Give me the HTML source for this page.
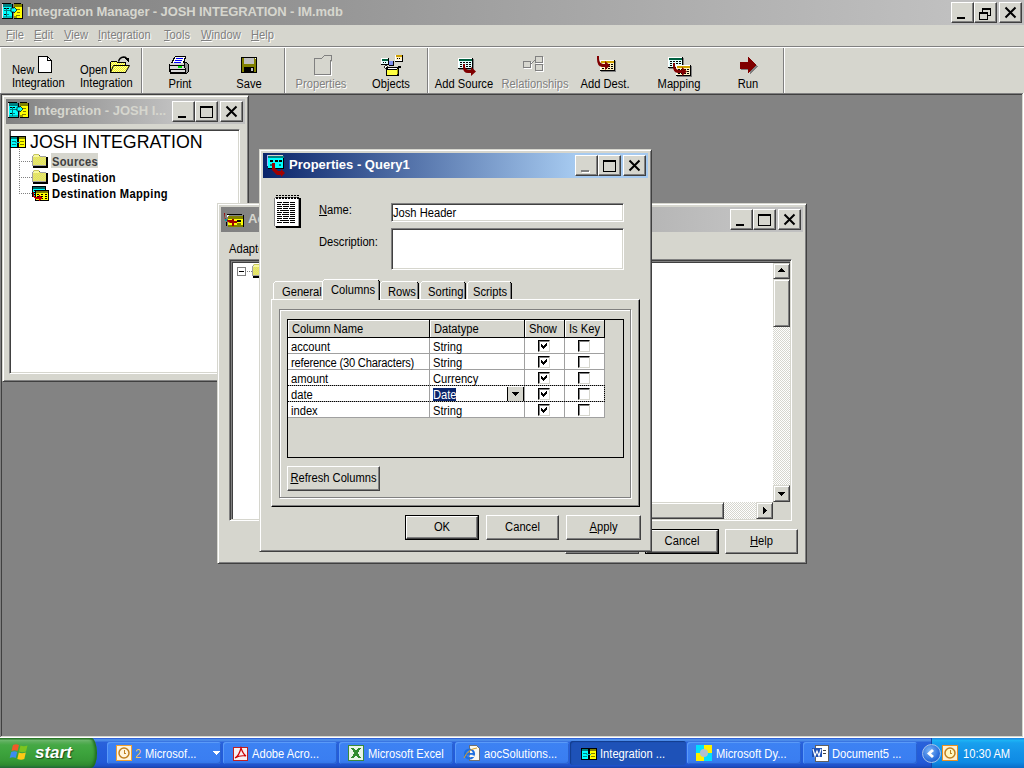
<!DOCTYPE html>
<html><head><meta charset="utf-8"><style>
*{box-sizing:border-box;margin:0;padding:0}
html,body{width:1024px;height:768px;overflow:hidden}
body{position:relative;background:#838383;font:11px "Liberation Sans",sans-serif;color:#000}
.a{position:absolute}
.t{position:absolute;white-space:nowrap;line-height:13px;font-size:12px;transform:translateY(1px) scaleX(0.93);transform-origin:0 0}
.raised{position:absolute;background:#D6D6CE;border:1px solid;border-color:#fff #404040 #404040 #fff;box-shadow:inset -1px -1px #808080}
.winf{position:absolute;background:#D6D6CE;border:1px solid;border-color:#D6D6CE #404040 #404040 #D6D6CE;box-shadow:inset 1px 1px #fff,inset -1px -1px #808080}
.sunk{position:absolute;background:#fff;border:1px solid;border-color:#808080 #fff #fff #808080;box-shadow:inset 1px 1px #404040,inset -1px -1px #D6D6CE}
.ttl{position:absolute;white-space:nowrap;font-weight:bold;font-size:13px;line-height:16px}
.dis{color:#808080;text-shadow:1px 1px 0 #fff}
u{text-decoration:underline;text-decoration-thickness:1px;text-underline-offset:1px}
svg{overflow:visible}
</style></head><body>
<div class="a" style="left:0px;top:0px;width:1024px;height:25px;background:linear-gradient(90deg,#808080,#C0C0C0 951px);"></div>
<svg class="a" style="left:2px;top:3px" width="21" height="16" viewBox="0 0 21 16" shape-rendering="crispEdges"><rect x="0" y="0" width="9" height="1" fill="#000"/><rect x="0" y="1" width="1" height="14" fill="#F0E8E8"/><rect x="1" y="1" width="9" height="3" fill="#008080"/><rect x="1" y="4" width="9" height="11" fill="#00FFFF"/><rect x="2" y="5" width="2" height="1" fill="#000"/><rect x="5" y="5" width="2" height="1" fill="#000"/><rect x="2" y="7" width="7" height="1" fill="#008080"/><rect x="2" y="11" width="2" height="1" fill="#000"/><rect x="5" y="11" width="2" height="1" fill="#008080"/><rect x="1" y="13" width="9" height="2" fill="#00C0C0"/><rect x="4" y="5" width="1" height="9" fill="#008080"/><rect x="10" y="1" width="1" height="15" fill="#000"/><rect x="0" y="15" width="11" height="1" fill="#000"/><rect x="12" y="0" width="7" height="1" fill="#000"/><rect x="12" y="1" width="8" height="3" fill="#808000"/><rect x="12" y="4" width="8" height="11" fill="#FFFF00"/><rect x="14" y="6" width="4" height="1" fill="#808000"/><rect x="15" y="9" width="3" height="1" fill="#808000"/><rect x="14" y="12" width="4" height="1" fill="#808000"/><rect x="12" y="13" width="3" height="2" fill="#A0A000"/><rect x="20" y="1" width="1" height="15" fill="#000"/><rect x="12" y="15" width="9" height="1" fill="#000"/><path d="M9 5h3v-1l3 3l-3 3v-1h-3z" fill="#00FFFF" stroke="#000" stroke-width="0.7" shape-rendering="auto"/></svg>
<div class="ttl" style="left:27px;top:4px;color:#D6D6CE;letter-spacing:-0.1px">Integration Manager - JOSH INTEGRATION - IM.mdb</div>
<div class="raised" style="left:951px;top:2px;width:23px;height:21px"><svg class="a" style="left:0;top:0" width="21" height="19" shape-rendering="crispEdges"><rect x="5" y="14" width="8" height="2" fill="#000"/></svg></div>
<div class="raised" style="left:974px;top:2px;width:23px;height:21px"><svg class="a" style="left:0;top:0" width="21" height="19" shape-rendering="crispEdges"><path d="M7.5 6.5h8v6h-8z" fill="none" stroke="#000"/><rect x="7" y="5" width="9" height="2" fill="#000"/><rect x="4" y="9" width="9" height="8" fill="#D6D6CE"/><path d="M4.5 9.5h8v7h-8z" fill="none" stroke="#000"/><rect x="4" y="9" width="9" height="2" fill="#000"/></svg></div>
<div class="raised" style="left:999px;top:2px;width:23px;height:21px"><svg class="a" style="left:0;top:0" width="21" height="19" shape-rendering="crispEdges"><path d="M5.5 4.5L15.5 14.5M15.5 4.5L5.5 14.5" stroke="#000" stroke-width="2" shape-rendering="auto"/></svg></div>
<div class="a" style="left:0px;top:25px;width:1024px;height:21px;background:#D6D6CE;"></div>
<div class="a" style="left:0px;top:46px;width:1024px;height:1px;background:#808080;"></div>
<div class="a" style="left:0px;top:47px;width:1024px;height:1px;background:#fff;"></div>
<div class="t dis" style="left:6px;top:28px;"><u>F</u>ile</div>
<div class="t dis" style="left:34px;top:28px;"><u>E</u>dit</div>
<div class="t dis" style="left:64px;top:28px;"><u>V</u>iew</div>
<div class="t dis" style="left:98px;top:28px;"><u>I</u>ntegration</div>
<div class="t dis" style="left:164px;top:28px;"><u>T</u>ools</div>
<div class="t dis" style="left:201px;top:28px;"><u>W</u>indow</div>
<div class="t dis" style="left:251px;top:28px;"><u>H</u>elp</div>
<div class="a" style="left:0px;top:48px;width:1024px;height:45px;background:#D6D6CE;"></div>
<div class="a" style="left:0px;top:48px;width:1px;height:45px;background:#fff;"></div>
<div class="a" style="left:141px;top:48px;width:1px;height:45px;background:#808080;"></div>
<div class="a" style="left:142px;top:48px;width:1px;height:45px;background:#fff;"></div>
<div class="a" style="left:284px;top:48px;width:1px;height:45px;background:#808080;"></div>
<div class="a" style="left:285px;top:48px;width:1px;height:45px;background:#fff;"></div>
<div class="a" style="left:427px;top:48px;width:1px;height:45px;background:#808080;"></div>
<div class="a" style="left:428px;top:48px;width:1px;height:45px;background:#fff;"></div>
<div class="a" style="left:783px;top:48px;width:1px;height:45px;background:#808080;"></div>
<div class="a" style="left:784px;top:48px;width:1px;height:45px;background:#fff;"></div>
<div class="t" style="left:12px;top:63px;">New</div>
<div class="t" style="left:12px;top:76px;">Integration</div>
<div class="t" style="left:80px;top:63px;">Open</div>
<div class="t" style="left:80px;top:76px;">Integration</div>
<div class="t" style="left:130px;top:77px;width:100px;text-align:center;transform-origin:50% 0">Print</div>
<div class="t" style="left:199px;top:77px;width:100px;text-align:center;transform-origin:50% 0">Save</div>
<div class="t dis" style="left:271px;top:77px;width:100px;text-align:center;transform-origin:50% 0">Properties</div>
<div class="t" style="left:341px;top:77px;width:100px;text-align:center;transform-origin:50% 0">Objects</div>
<div class="t" style="left:414px;top:77px;width:100px;text-align:center;transform-origin:50% 0">Add Source</div>
<div class="t dis" style="left:485px;top:77px;width:100px;text-align:center;transform-origin:50% 0">Relationships</div>
<div class="t" style="left:555px;top:77px;width:100px;text-align:center;transform-origin:50% 0">Add Dest.</div>
<div class="t" style="left:629px;top:77px;width:100px;text-align:center;transform-origin:50% 0">Mapping</div>
<div class="t" style="left:698px;top:77px;width:100px;text-align:center;transform-origin:50% 0">Run</div>
<svg class="a" style="left:38px;top:56px" width="15" height="17" viewBox="0 0 15 17" shape-rendering="crispEdges"><path d="M0.5 0.5h9l4 4v11.5h-13z" fill="#fff" stroke="#000"/><path d="M9.5 0.5v4h4" fill="none" stroke="#000"/></svg>
<svg class="a" style="left:110px;top:55px" width="20" height="19" viewBox="0 0 20 19" shape-rendering="crispEdges"><defs><pattern id="dy" width="2" height="2" patternUnits="userSpaceOnUse"><rect width="2" height="2" fill="#FFFF00"/><rect width="1" height="1" fill="#F0F0C0"/><rect x="1" y="1" width="1" height="1" fill="#F0F0C0"/></pattern></defs><path d="M8.5 6.5q1-4 5-4.5q2 0 3 1" fill="none" stroke="#000" stroke-width="1.3" shape-rendering="auto"/><path d="M14 3h5v4z" fill="#000"/><path d="M0.5 17.5v-10l1-1h5l1 1h8v3" fill="url(#dy)" stroke="#000"/><rect x="1" y="8" width="14" height="3" fill="url(#dy)"/><path d="M3.5 10.5h16l-4 7h-15z" fill="url(#dy)" stroke="#000" shape-rendering="auto"/><rect x="1" y="17" width="15" height="1" fill="#000"/></svg>
<svg class="a" style="left:169px;top:56px" width="22" height="18" viewBox="0 0 22 18" shape-rendering="crispEdges"><path d="M6 0h11v2l-2 5H2l2-4z" fill="#000"/><path d="M6.5 1h9.5l-2 6H3.5z" fill="#fff"/><rect x="7" y="2" width="7" height="1" fill="#0000FF"/><rect x="6" y="4" width="7" height="1" fill="#0000FF"/><rect x="5" y="6" width="7" height="1" fill="#0000FF"/><rect x="0" y="8" width="19" height="8" fill="#000"/><rect x="1" y="8" width="15" height="1" fill="#D0D0D0"/><rect x="1" y="10" width="15" height="3" fill="#D8D8D8"/><rect x="9" y="10" width="4" height="2" fill="#00E000"/><rect x="2" y="14" width="14" height="2" fill="#D8D8D8"/><rect x="1" y="16" width="16" height="2" fill="#000"/><path d="M15 6h3l2 3v6l-3 3h-1z" fill="#000"/><path d="M16 7h2l1 2v6l-2 2z" fill="#909090"/></svg>
<svg class="a" style="left:241px;top:57px" width="16" height="16" viewBox="0 0 16 16" shape-rendering="crispEdges"><rect x="0" y="0" width="16" height="16" fill="#000"/><rect x="1" y="1" width="14" height="14" fill="#808000"/><rect x="3" y="1" width="10" height="6" fill="#C0C0C0"/><rect x="3" y="10" width="10" height="5" fill="#000"/><rect x="10" y="11" width="2" height="3" fill="#C0C0C0"/><rect x="14" y="1" width="1" height="1" fill="#fff"/></svg>
<svg class="a" style="left:313px;top:55px" width="20" height="20" viewBox="0 0 20 20" shape-rendering="crispEdges"><path d="M1.5 19.5v-16h7l3-3h7v5h-1v14z" fill="none" stroke="#808080"/><path d="M2 20h16V7h1v14H2z" fill="#fff"/></svg>
<svg class="a" style="left:380px;top:54px" width="23" height="22" viewBox="0 0 23 22" shape-rendering="crispEdges"><rect x="1" y="4" width="7" height="6" fill="#fff"/><rect x="2" y="5" width="6" height="2" fill="#006040"/><rect x="2" y="7" width="6" height="3" fill="#E0FFFF"/><rect x="3" y="8" width="1" height="1" fill="#000"/><rect x="5" y="8" width="1" height="1" fill="#000"/><rect x="8" y="4" width="1" height="7" fill="#000"/><rect x="1" y="10" width="8" height="1" fill="#000"/><rect x="15" y="1" width="7" height="6" fill="#fff"/><rect x="16" y="1" width="6" height="2" fill="#D0A000"/><rect x="16" y="3" width="6" height="3" fill="#FFF0C0"/><rect x="17" y="4" width="1" height="1" fill="#000"/><rect x="19" y="4" width="1" height="1" fill="#000"/><rect x="22" y="1" width="1" height="7" fill="#000"/><rect x="15" y="7" width="8" height="1" fill="#000"/><rect x="9" y="7" width="5" height="5" fill="#000"/><rect x="9" y="7" width="4" height="4" fill="#8090F0"/><path d="M4 13l2 -2l2 2l-2 2z" fill="#fff" stroke="#000" stroke-width="0.8" shape-rendering="auto"/><rect x="6" y="13" width="13" height="9" fill="#000"/><rect x="8" y="14" width="9" height="1" fill="#fff"/><rect x="7" y="16" width="10" height="5" fill="#FFFF40"/><rect x="17" y="15" width="1" height="5" fill="#A0A000"/><rect x="18" y="12" width="3" height="2" fill="#000"/></svg>
<svg class="a" style="left:457px;top:57px" width="20" height="20" viewBox="0 0 20 20" shape-rendering="crispEdges"><g transform="translate(1,1)"><rect x="15" y="1" width="1" height="11" fill="#808080"/><rect x="1" y="11" width="15" height="1" fill="#808080"/><rect x="0" y="0" width="14" height="10" fill="#fff"/><rect x="1" y="1" width="13" height="2" fill="#006040"/><rect x="1" y="3" width="13" height="7" fill="#E0FFFF"/><rect x="2" y="4" width="2" height="1" fill="#000"/><rect x="5" y="4" width="2" height="1" fill="#000"/><rect x="8" y="4" width="2" height="1" fill="#000"/><rect x="11" y="4" width="2" height="1" fill="#000"/><rect x="2" y="6" width="2" height="1" fill="#000"/><rect x="5" y="6" width="2" height="1" fill="#000"/><rect x="8" y="6" width="2" height="1" fill="#000"/><rect x="11" y="6" width="2" height="1" fill="#000"/><rect x="2" y="8" width="2" height="1" fill="#000"/><rect x="5" y="8" width="2" height="1" fill="#000"/><rect x="8" y="8" width="2" height="1" fill="#000"/><rect x="11" y="8" width="2" height="1" fill="#000"/><rect x="14" y="0" width="1" height="11" fill="#000"/><rect x="0" y="10" width="15" height="1" fill="#000"/></g><path d="M6 7h2v3q1 3 4 3h2v-3l5 4.5l-5 4.5v-3h-3q-5 0-5-6z" fill="#800000" shape-rendering="auto"/></svg>
<svg class="a" style="left:522px;top:56px" width="23" height="17" viewBox="0 0 23 17" shape-rendering="crispEdges"><rect x="1.5" y="5.5" width="7" height="6" fill="none" stroke="#808080"/><rect x="2" y="12" width="8" height="1" fill="#fff"/><rect x="9" y="6" width="1" height="6" fill="#fff"/><rect x="13.5" y="0.5" width="7" height="6" fill="none" stroke="#808080"/><rect x="14" y="7" width="8" height="1" fill="#fff"/><rect x="21" y="1" width="1" height="6" fill="#fff"/><rect x="13.5" y="8.5" width="7" height="6" fill="none" stroke="#808080"/><rect x="14" y="15" width="8" height="1" fill="#fff"/><rect x="21" y="9" width="1" height="6" fill="#fff"/><path d="M8.5 8.5l5-5" stroke="#808080" shape-rendering="auto"/></svg>
<svg class="a" style="left:596px;top:56px" width="21" height="17" viewBox="0 0 21 17" shape-rendering="crispEdges"><g transform="translate(4,4)"><rect x="15" y="1" width="1" height="11" fill="#808080"/><rect x="1" y="11" width="15" height="1" fill="#808080"/><rect x="0" y="0" width="14" height="10" fill="#fff"/><rect x="1" y="1" width="13" height="2" fill="#D0A000"/><rect x="1" y="3" width="13" height="7" fill="#FFF0C0"/><rect x="2" y="4" width="2" height="1" fill="#000"/><rect x="5" y="4" width="2" height="1" fill="#000"/><rect x="8" y="4" width="2" height="1" fill="#000"/><rect x="11" y="4" width="2" height="1" fill="#000"/><rect x="2" y="6" width="2" height="1" fill="#000"/><rect x="5" y="6" width="2" height="1" fill="#000"/><rect x="8" y="6" width="2" height="1" fill="#000"/><rect x="11" y="6" width="2" height="1" fill="#000"/><rect x="2" y="8" width="2" height="1" fill="#000"/><rect x="5" y="8" width="2" height="1" fill="#000"/><rect x="8" y="8" width="2" height="1" fill="#000"/><rect x="11" y="8" width="2" height="1" fill="#000"/><rect x="14" y="0" width="1" height="11" fill="#000"/><rect x="0" y="10" width="15" height="1" fill="#000"/></g><path d="M1 0h2v3q0 4 4 5h2v-3l5 4.5l-5 4.5v-3h-3q-5-1-5-8z" fill="#800000" shape-rendering="auto"/></svg>
<svg class="a" style="left:668px;top:57px" width="25" height="20" viewBox="0 0 25 20" shape-rendering="crispEdges"><g transform="translate(0,0)"><rect x="15" y="1" width="1" height="11" fill="#808080"/><rect x="1" y="11" width="15" height="1" fill="#808080"/><rect x="0" y="0" width="14" height="10" fill="#fff"/><rect x="1" y="1" width="13" height="2" fill="#006040"/><rect x="1" y="3" width="13" height="7" fill="#E0FFFF"/><rect x="2" y="4" width="2" height="1" fill="#000"/><rect x="5" y="4" width="2" height="1" fill="#000"/><rect x="8" y="4" width="2" height="1" fill="#000"/><rect x="11" y="4" width="2" height="1" fill="#000"/><rect x="2" y="6" width="2" height="1" fill="#000"/><rect x="5" y="6" width="2" height="1" fill="#000"/><rect x="8" y="6" width="2" height="1" fill="#000"/><rect x="11" y="6" width="2" height="1" fill="#000"/><rect x="2" y="8" width="2" height="1" fill="#000"/><rect x="5" y="8" width="2" height="1" fill="#000"/><rect x="8" y="8" width="2" height="1" fill="#000"/><rect x="11" y="8" width="2" height="1" fill="#000"/><rect x="14" y="0" width="1" height="11" fill="#000"/><rect x="0" y="10" width="15" height="1" fill="#000"/></g><g transform="translate(8,8)"><rect x="15" y="1" width="1" height="11" fill="#808080"/><rect x="1" y="11" width="15" height="1" fill="#808080"/><rect x="0" y="0" width="14" height="10" fill="#fff"/><rect x="1" y="1" width="13" height="2" fill="#D0A000"/><rect x="1" y="3" width="13" height="7" fill="#FFF0C0"/><rect x="2" y="4" width="2" height="1" fill="#000"/><rect x="5" y="4" width="2" height="1" fill="#000"/><rect x="8" y="4" width="2" height="1" fill="#000"/><rect x="11" y="4" width="2" height="1" fill="#000"/><rect x="2" y="6" width="2" height="1" fill="#000"/><rect x="5" y="6" width="2" height="1" fill="#000"/><rect x="8" y="6" width="2" height="1" fill="#000"/><rect x="11" y="6" width="2" height="1" fill="#000"/><rect x="2" y="8" width="2" height="1" fill="#000"/><rect x="5" y="8" width="2" height="1" fill="#000"/><rect x="8" y="8" width="2" height="1" fill="#000"/><rect x="11" y="8" width="2" height="1" fill="#000"/><rect x="14" y="0" width="1" height="11" fill="#000"/><rect x="0" y="10" width="15" height="1" fill="#000"/></g><path d="M5 6h2v3q1 4 4 4h3v-3l5 4.5l-5 4.5v-3h-4q-5 0-5-7z" fill="#800000" shape-rendering="auto"/></svg>
<svg class="a" style="left:740px;top:57px" width="19" height="18" viewBox="0 0 19 18" shape-rendering="crispEdges"><path d="M9 1l9 8l-8 8v-4H1V6h8z" fill="#808080"/><path d="M8 0l9 8l-9 8v-4H0V5h8z" fill="#800000"/></svg>
<div class="a" style="left:0px;top:93px;width:1024px;height:1px;background:#808080;"></div>
<div class="a" style="left:0px;top:94px;width:1024px;height:1px;background:#404040;"></div>
<div class="a" style="left:0px;top:93px;width:1px;height:645px;background:#808080;"></div>
<div class="a" style="left:1px;top:94px;width:1px;height:643px;background:#404040;"></div>
<div class="a" style="left:1022px;top:94px;width:1px;height:643px;background:#D6D6CE;"></div>
<div class="a" style="left:1023px;top:93px;width:1px;height:645px;background:#fff;"></div>
<div class="a" style="left:1px;top:736px;width:1022px;height:1px;background:#D6D6CE;"></div>
<div class="a" style="left:0px;top:737px;width:1024px;height:1px;background:#fff;"></div>
<div class="winf" style="left:2px;top:95px;width:247px;height:287px"></div>
<div class="a" style="left:6px;top:99px;width:239px;height:25px;background:linear-gradient(90deg,#808080,#C0C0C0 166px);"></div>
<div class="ttl" style="left:34px;top:103px;color:#D6D6CE">Integration - JOSH I...</div>
<svg class="a" style="left:8px;top:102px" width="21" height="16" viewBox="0 0 21 16" shape-rendering="crispEdges"><rect x="0" y="0" width="9" height="1" fill="#000"/><rect x="0" y="1" width="1" height="14" fill="#F0E8E8"/><rect x="1" y="1" width="9" height="3" fill="#008080"/><rect x="1" y="4" width="9" height="11" fill="#00FFFF"/><rect x="2" y="5" width="2" height="1" fill="#000"/><rect x="5" y="5" width="2" height="1" fill="#000"/><rect x="2" y="7" width="7" height="1" fill="#008080"/><rect x="2" y="11" width="2" height="1" fill="#000"/><rect x="5" y="11" width="2" height="1" fill="#008080"/><rect x="1" y="13" width="9" height="2" fill="#00C0C0"/><rect x="4" y="5" width="1" height="9" fill="#008080"/><rect x="10" y="1" width="1" height="15" fill="#000"/><rect x="0" y="15" width="11" height="1" fill="#000"/><rect x="12" y="0" width="7" height="1" fill="#000"/><rect x="12" y="1" width="8" height="3" fill="#808000"/><rect x="12" y="4" width="8" height="11" fill="#FFFF00"/><rect x="14" y="6" width="4" height="1" fill="#808000"/><rect x="15" y="9" width="3" height="1" fill="#808000"/><rect x="14" y="12" width="4" height="1" fill="#808000"/><rect x="12" y="13" width="3" height="2" fill="#A0A000"/><rect x="20" y="1" width="1" height="15" fill="#000"/><rect x="12" y="15" width="9" height="1" fill="#000"/><path d="M9 5h3v-1l3 3l-3 3v-1h-3z" fill="#00FFFF" stroke="#000" stroke-width="0.7" shape-rendering="auto"/></svg>
<div class="raised" style="left:172px;top:101px;width:23px;height:21px"><svg class="a" style="left:0;top:0" width="21" height="19" shape-rendering="crispEdges"><rect x="5" y="14" width="8" height="2" fill="#000"/></svg></div>
<div class="raised" style="left:195px;top:101px;width:23px;height:21px"><svg class="a" style="left:0;top:0" width="21" height="19" shape-rendering="crispEdges"><path d="M4.5 4.5h12v11h-12z" fill="none" stroke="#000"/><rect x="4" y="4" width="13" height="2" fill="#000"/></svg></div>
<div class="raised" style="left:220px;top:101px;width:23px;height:21px"><svg class="a" style="left:0;top:0" width="21" height="19" shape-rendering="crispEdges"><path d="M5.5 4.5L15.5 14.5M15.5 4.5L5.5 14.5" stroke="#000" stroke-width="2" shape-rendering="auto"/></svg></div>
<div class="sunk" style="left:9px;top:129px;width:231px;height:245px"></div>
<svg class="a" style="left:10px;top:136px" width="16" height="12" viewBox="0 0 16 12" shape-rendering="crispEdges"><rect x="0" y="0" width="8" height="12" fill="#000"/><rect x="1" y="1" width="6" height="2" fill="#008080"/><rect x="1" y="3" width="6" height="8" fill="#00FFFF"/><rect x="2" y="5" width="4" height="1" fill="#008080"/><rect x="2" y="8" width="4" height="1" fill="#008080"/><rect x="8" y="0" width="8" height="12" fill="#000"/><rect x="9" y="1" width="6" height="2" fill="#808000"/><rect x="9" y="3" width="6" height="8" fill="#FFFF00"/><rect x="10" y="5" width="4" height="1" fill="#808000"/><rect x="10" y="8" width="4" height="1" fill="#808000"/><rect x="5" y="6" width="5" height="1" fill="#00C0C0"/></svg>
<div class="t" style="left:30px;top:133px;font-size:17.8px;line-height:18px;transform:none">JOSH INTEGRATION</div>
<div class="a" style="left:19px;top:149px;width:1px;height:45px;background:repeating-linear-gradient(#808080 0 1px,transparent 1px 2px);"></div>
<div class="a" style="left:20px;top:161px;width:12px;height:1px;background:repeating-linear-gradient(90deg,transparent 0 1px,#808080 1px 2px);"></div>
<div class="a" style="left:20px;top:177px;width:12px;height:1px;background:repeating-linear-gradient(90deg,transparent 0 1px,#808080 1px 2px);"></div>
<div class="a" style="left:20px;top:193px;width:12px;height:1px;background:repeating-linear-gradient(90deg,transparent 0 1px,#808080 1px 2px);"></div>
<svg class="a" style="left:32px;top:154px" width="17" height="15" viewBox="0 0 17 15" shape-rendering="crispEdges"><defs><pattern id="dy2" width="2" height="2" patternUnits="userSpaceOnUse"><rect width="2" height="2" fill="#F0F040"/><rect width="1" height="1" fill="#D8D890"/><rect x="1" y="1" width="1" height="1" fill="#D8D890"/></pattern></defs><rect x="14" y="3" width="2" height="11" fill="#000"/><rect x="1" y="12" width="15" height="2" fill="#000"/><rect x="1" y="2" width="13" height="10" fill="url(#dy2)"/><rect x="1" y="0" width="6" height="3" fill="#F8F8A0"/><rect x="2" y="0" width="5" height="1" fill="#C8C860"/><rect x="0" y="2" width="1" height="10" fill="#A0A0A0"/><rect x="1" y="1" width="1" height="1" fill="#A0A0A0"/><rect x="7" y="1" width="1" height="1" fill="#606060"/><rect x="8" y="2" width="6" height="1" fill="#A0A0A0"/><rect x="1" y="11" width="13" height="1" fill="#A0A0A0"/></svg>
<svg class="a" style="left:32px;top:170px" width="17" height="15" viewBox="0 0 17 15" shape-rendering="crispEdges"><defs><pattern id="dy2" width="2" height="2" patternUnits="userSpaceOnUse"><rect width="2" height="2" fill="#F0F040"/><rect width="1" height="1" fill="#D8D890"/><rect x="1" y="1" width="1" height="1" fill="#D8D890"/></pattern></defs><rect x="14" y="3" width="2" height="11" fill="#000"/><rect x="1" y="12" width="15" height="2" fill="#000"/><rect x="1" y="2" width="13" height="10" fill="url(#dy2)"/><rect x="1" y="0" width="6" height="3" fill="#F8F8A0"/><rect x="2" y="0" width="5" height="1" fill="#C8C860"/><rect x="0" y="2" width="1" height="10" fill="#A0A0A0"/><rect x="1" y="1" width="1" height="1" fill="#A0A0A0"/><rect x="7" y="1" width="1" height="1" fill="#606060"/><rect x="8" y="2" width="6" height="1" fill="#A0A0A0"/><rect x="1" y="11" width="13" height="1" fill="#A0A0A0"/></svg>
<svg class="a" style="left:32px;top:186px" width="17" height="15" viewBox="0 0 17 15" shape-rendering="crispEdges"><g transform="translate(0,0)"><rect x="0" y="0" width="14" height="11" fill="#000"/><rect x="1" y="1" width="12" height="2" fill="#006060"/><rect x="1" y="3" width="12" height="7" fill="#00FFFF"/><rect x="2" y="4" width="2" height="1" fill="#000"/><rect x="6" y="4" width="2" height="1" fill="#000"/><rect x="10" y="4" width="2" height="1" fill="#000"/><rect x="2" y="6" width="2" height="1" fill="#000"/><rect x="6" y="6" width="2" height="1" fill="#000"/><rect x="10" y="6" width="2" height="1" fill="#000"/><rect x="2" y="8" width="2" height="1" fill="#000"/><rect x="6" y="8" width="2" height="1" fill="#000"/><rect x="10" y="8" width="2" height="1" fill="#000"/></g><g transform="translate(3,4)"><rect x="0" y="0" width="14" height="11" fill="#000"/><rect x="1" y="1" width="12" height="2" fill="#808000"/><rect x="1" y="3" width="12" height="7" fill="#FFFF00"/><rect x="2" y="4" width="2" height="1" fill="#000"/><rect x="6" y="4" width="2" height="1" fill="#000"/><rect x="10" y="4" width="2" height="1" fill="#000"/><rect x="2" y="6" width="2" height="1" fill="#000"/><rect x="6" y="6" width="2" height="1" fill="#000"/><rect x="10" y="6" width="2" height="1" fill="#000"/><rect x="2" y="8" width="2" height="1" fill="#000"/><rect x="6" y="8" width="2" height="1" fill="#000"/><rect x="10" y="8" width="2" height="1" fill="#000"/></g><path d="M2 6v2q0 3 3 3h2v-2l4 3l-4 3v-2h-2q-4 0-4-4v-3z" fill="#C00000"/></svg>
<div class="a" style="left:51px;top:153px;width:47px;height:15px;background:#D6D6CE;"></div>
<div class="t" style="left:52px;top:155px;font-weight:bold;color:#404040;letter-spacing:0.3px">Sources</div>
<div class="t" style="left:52px;top:171px;font-weight:bold;letter-spacing:0.3px">Destination</div>
<div class="t" style="left:52px;top:187px;font-weight:bold;letter-spacing:0.35px">Destination Mapping</div>
<div class="winf" style="left:217px;top:203px;width:590px;height:361px"></div>
<div class="a" style="left:221px;top:207px;width:582px;height:25px;background:linear-gradient(90deg,#808080,#C0C0C0 509px);"></div>
<div class="ttl" style="left:248px;top:211px;color:#D6D6CE">Adapter</div>
<svg class="a" style="left:224px;top:213px" width="21" height="16" viewBox="0 0 21 16" shape-rendering="crispEdges"><rect x="3" y="1" width="15" height="1" fill="#000"/><rect x="3" y="2" width="2" height="2" fill="#fff"/><rect x="4" y="3" width="15" height="3" fill="#808000"/><rect x="4" y="6" width="15" height="6" fill="#FFFF00"/><rect x="19" y="2" width="1" height="12" fill="#000"/><rect x="2" y="9" width="1" height="4" fill="#000"/><rect x="4" y="12" width="15" height="2" fill="#808000"/><rect x="13" y="7" width="4" height="2" fill="#000"/><rect x="13" y="10" width="4" height="2" fill="#808000"/><path d="M0 0h1v5l3 2h4v-1h2v2h3v2h-3v3h-2v-3h-2l-5-3z" fill="#A00000" shape-rendering="auto"/><rect x="1" y="6" width="2" height="2" fill="#00A0A0"/></svg>
<div class="raised" style="left:730px;top:209px;width:23px;height:21px"><svg class="a" style="left:0;top:0" width="21" height="19" shape-rendering="crispEdges"><rect x="5" y="14" width="8" height="2" fill="#000"/></svg></div>
<div class="raised" style="left:753px;top:209px;width:23px;height:21px"><svg class="a" style="left:0;top:0" width="21" height="19" shape-rendering="crispEdges"><path d="M4.5 4.5h12v11h-12z" fill="none" stroke="#000"/><rect x="4" y="4" width="13" height="2" fill="#000"/></svg></div>
<div class="raised" style="left:778px;top:209px;width:23px;height:21px"><svg class="a" style="left:0;top:0" width="21" height="19" shape-rendering="crispEdges"><path d="M5.5 4.5L15.5 14.5M15.5 4.5L5.5 14.5" stroke="#000" stroke-width="2" shape-rendering="auto"/></svg></div>
<div class="t" style="left:229px;top:242px;">Adapter</div>
<div class="a" style="left:229px;top:259px;width:563px;height:262px;background:#fff;border:1px solid;border-color:#808080 #fff #fff #808080;box-shadow:inset 1px 1px #404040,inset -1px -1px #D6D6CE,inset 2px 2px #808080,inset 3px 3px #404040"></div>
<svg class="a" style="left:237px;top:267px" width="9" height="9" viewBox="0 0 9 9" shape-rendering="crispEdges"><rect x="0.5" y="0.5" width="8" height="8" fill="#fff" stroke="#808080"/><rect x="2" y="4" width="5" height="1" fill="#000"/></svg>
<div class="a" style="left:247px;top:271px;width:5px;height:1px;background:repeating-linear-gradient(90deg,#808080 0 1px,transparent 1px 2px);"></div>
<svg class="a" style="left:252px;top:264px" width="17" height="15" viewBox="0 0 17 15" shape-rendering="crispEdges"><defs><pattern id="dy2" width="2" height="2" patternUnits="userSpaceOnUse"><rect width="2" height="2" fill="#F0F040"/><rect width="1" height="1" fill="#D8D890"/><rect x="1" y="1" width="1" height="1" fill="#D8D890"/></pattern></defs><rect x="14" y="3" width="2" height="11" fill="#000"/><rect x="1" y="12" width="15" height="2" fill="#000"/><rect x="1" y="2" width="13" height="10" fill="url(#dy2)"/><rect x="1" y="0" width="6" height="3" fill="#F8F8A0"/><rect x="2" y="0" width="5" height="1" fill="#C8C860"/><rect x="0" y="2" width="1" height="10" fill="#A0A0A0"/><rect x="1" y="1" width="1" height="1" fill="#A0A0A0"/><rect x="7" y="1" width="1" height="1" fill="#606060"/><rect x="8" y="2" width="6" height="1" fill="#A0A0A0"/><rect x="1" y="11" width="13" height="1" fill="#A0A0A0"/></svg>
<div class="a" style="left:773px;top:263px;width:17px;height:239px;background:repeating-conic-gradient(#fff 0 25%,#D6D6CE 0 50%) 0 0/2px 2px"></div>
<div class="a" style="left:773px;top:263px;width:17px;height:16px;border:1px solid;border-color:#D6D6CE #404040 #404040 #D6D6CE;box-shadow:inset 1px 1px #fff,inset -1px -1px #808080;background:#D6D6CE"></div>
<svg class="a" style="left:778px;top:268px" width="7" height="4" viewBox="0 0 7 4" shape-rendering="crispEdges"><rect x="0" y="3" width="7" height="1" fill="#000"/><rect x="1" y="2" width="5" height="1" fill="#000"/><rect x="2" y="1" width="3" height="1" fill="#000"/><rect x="3" y="0" width="1" height="1" fill="#000"/></svg>
<div class="a" style="left:773px;top:279px;width:17px;height:48px;border:1px solid;border-color:#D6D6CE #404040 #404040 #D6D6CE;box-shadow:inset 1px 1px #fff,inset -1px -1px #808080;background:#D6D6CE"></div>
<div class="a" style="left:773px;top:485px;width:17px;height:17px;border:1px solid;border-color:#D6D6CE #404040 #404040 #D6D6CE;box-shadow:inset 1px 1px #fff,inset -1px -1px #808080;background:#D6D6CE"></div>
<svg class="a" style="left:778px;top:492px" width="7" height="4" viewBox="0 0 7 4" shape-rendering="crispEdges"><rect x="0" y="0" width="7" height="1" fill="#000"/><rect x="1" y="1" width="5" height="1" fill="#000"/><rect x="2" y="2" width="3" height="1" fill="#000"/><rect x="3" y="3" width="1" height="1" fill="#000"/></svg>
<div class="a" style="left:262px;top:502px;width:511px;height:17px;background:repeating-conic-gradient(#fff 0 25%,#D6D6CE 0 50%) 0 0/2px 2px"></div>
<div class="a" style="left:262px;top:502px;width:462px;height:17px;border:1px solid;border-color:#D6D6CE #404040 #404040 #D6D6CE;box-shadow:inset 1px 1px #fff,inset -1px -1px #808080;background:#D6D6CE"></div>
<div class="a" style="left:756px;top:502px;width:17px;height:17px;border:1px solid;border-color:#D6D6CE #404040 #404040 #D6D6CE;box-shadow:inset 1px 1px #fff,inset -1px -1px #808080;background:#D6D6CE"></div>
<svg class="a" style="left:763px;top:507px" width="4" height="7" viewBox="0 0 4 7" shape-rendering="crispEdges"><rect x="0" y="0" width="1" height="7" fill="#000"/><rect x="1" y="1" width="1" height="5" fill="#000"/><rect x="2" y="2" width="1" height="3" fill="#000"/><rect x="3" y="3" width="1" height="1" fill="#000"/></svg>
<div class="a" style="left:773px;top:502px;width:17px;height:17px;background:#D6D6CE;"></div>
<div class="raised" style="left:565px;top:529px;width:74px;height:25px"><div class="t" style="left:-1px;top:4px;width:74px;text-align:center;transform-origin:50% 0">OK</div></div>
<div class="a" style="left:645px;top:529px;width:74px;height:25px;border:1px solid #000;background:#D6D6CE"><div class="raised" style="left:0;top:0;width:72px;height:23px"></div><div class="t" style="left:0;top:4px;width:72px;text-align:center;transform-origin:50% 0">Cancel</div></div>
<div class="raised" style="left:725px;top:529px;width:73px;height:25px"><div class="t" style="left:-1px;top:4px;width:73px;text-align:center;transform-origin:50% 0"><u>H</u>elp</div></div>
<div class="winf" style="left:259px;top:149px;width:393px;height:403px"></div>
<div class="a" style="left:263px;top:153px;width:385px;height:25px;background:linear-gradient(90deg,#0A246A,#A6CAF0 312px);"></div>
<div class="ttl" style="left:289px;top:157px;color:#fff">Properties - Query1</div>
<svg class="a" style="left:267px;top:155px" width="20" height="20" viewBox="0 0 20 20" shape-rendering="crispEdges"><rect x="0" y="0" width="1" height="11" fill="#A0B0FF"/><rect x="1" y="0" width="15" height="1" fill="#D8D0C8"/><rect x="1" y="1" width="16" height="2" fill="#008080"/><rect x="1" y="3" width="16" height="11" fill="#000"/><rect x="1" y="3" width="15" height="10" fill="#00FFFF"/><rect x="3" y="5" width="3" height="2" fill="#000"/><rect x="8" y="5" width="3" height="2" fill="#000"/><rect x="12" y="5" width="3" height="2" fill="#000"/><rect x="3" y="9" width="2" height="2" fill="#008080"/><rect x="12" y="9" width="2" height="2" fill="#008080"/><path d="M5 8h3v5l3 3h3v-2l4 4l-4 4v-2h-4l-5-5z" fill="#A00000" shape-rendering="auto"/></svg>
<div class="raised" style="left:575px;top:155px;width:23px;height:21px"><svg class="a" style="left:0;top:0" width="21" height="19" shape-rendering="crispEdges"><rect x="6" y="15" width="8" height="2" fill="#fff"/><rect x="5" y="14" width="8" height="2" fill="#808080"/></svg></div>
<div class="raised" style="left:598px;top:155px;width:23px;height:21px"><svg class="a" style="left:0;top:0" width="21" height="19" shape-rendering="crispEdges"><path d="M4.5 4.5h12v11h-12z" fill="none" stroke="#000"/><rect x="4" y="4" width="13" height="2" fill="#000"/></svg></div>
<div class="raised" style="left:623px;top:155px;width:23px;height:21px"><svg class="a" style="left:0;top:0" width="21" height="19" shape-rendering="crispEdges"><path d="M5.5 4.5L15.5 14.5M15.5 4.5L5.5 14.5" stroke="#000" stroke-width="2" shape-rendering="auto"/></svg></div>
<svg class="a" style="left:274px;top:195px" width="28" height="33" viewBox="0 0 28 33" shape-rendering="crispEdges"><rect x="0.5" y="2.5" width="24" height="29" rx="2" fill="#fff" stroke="#808080"/><rect x="25" y="3" width="2" height="29" fill="#000"/><rect x="2" y="31" width="25" height="2" fill="#000"/><rect x="24" y="4" width="1" height="27" fill="#A0A0A0"/><rect x="2" y="0" width="2" height="1" fill="#000"/><rect x="2" y="2" width="2" height="2" fill="#000"/><rect x="5" y="0" width="2" height="1" fill="#000"/><rect x="5" y="2" width="2" height="2" fill="#000"/><rect x="8" y="0" width="2" height="1" fill="#000"/><rect x="8" y="2" width="2" height="2" fill="#000"/><rect x="11" y="0" width="2" height="1" fill="#000"/><rect x="11" y="2" width="2" height="2" fill="#000"/><rect x="14" y="0" width="2" height="1" fill="#000"/><rect x="14" y="2" width="2" height="2" fill="#000"/><rect x="17" y="0" width="2" height="1" fill="#000"/><rect x="17" y="2" width="2" height="2" fill="#000"/><rect x="20" y="0" width="2" height="1" fill="#000"/><rect x="20" y="2" width="2" height="2" fill="#000"/><rect x="23" y="0" width="2" height="1" fill="#000"/><rect x="23" y="2" width="2" height="2" fill="#000"/><rect x="3" y="7" width="18" height="1" fill="#000"/><rect x="8" y="7" width="1" height="1" fill="#fff"/><rect x="15" y="7" width="1" height="1" fill="#fff"/><rect x="3" y="9" width="18" height="1" fill="#000"/><rect x="7" y="9" width="1" height="1" fill="#fff"/><rect x="15" y="9" width="1" height="1" fill="#fff"/><rect x="3" y="11" width="18" height="1" fill="#000"/><rect x="8" y="11" width="1" height="1" fill="#fff"/><rect x="15" y="11" width="1" height="1" fill="#fff"/><rect x="3" y="13" width="18" height="1" fill="#000"/><rect x="8" y="13" width="1" height="1" fill="#fff"/><rect x="14" y="13" width="1" height="1" fill="#fff"/><rect x="3" y="15" width="18" height="1" fill="#000"/><rect x="5" y="15" width="1" height="1" fill="#fff"/><rect x="15" y="15" width="1" height="1" fill="#fff"/><rect x="3" y="17" width="18" height="1" fill="#000"/><rect x="8" y="17" width="1" height="1" fill="#fff"/><rect x="15" y="17" width="1" height="1" fill="#fff"/><rect x="3" y="19" width="18" height="1" fill="#000"/><rect x="7" y="19" width="1" height="1" fill="#fff"/><rect x="15" y="19" width="1" height="1" fill="#fff"/><rect x="3" y="21" width="18" height="1" fill="#000"/><rect x="8" y="21" width="1" height="1" fill="#fff"/><rect x="15" y="21" width="1" height="1" fill="#fff"/><rect x="3" y="23" width="18" height="1" fill="#000"/><rect x="8" y="23" width="1" height="1" fill="#fff"/><rect x="14" y="23" width="1" height="1" fill="#fff"/><rect x="3" y="25" width="18" height="1" fill="#000"/><rect x="5" y="25" width="1" height="1" fill="#fff"/><rect x="15" y="25" width="1" height="1" fill="#fff"/><rect x="3" y="27" width="18" height="1" fill="#000"/><rect x="8" y="27" width="1" height="1" fill="#fff"/><rect x="15" y="27" width="1" height="1" fill="#fff"/></svg>
<div class="t" style="left:319px;top:203px;"><u>N</u>ame:</div>
<div class="t" style="left:319px;top:235px;">Description:</div>
<div class="sunk" style="left:391px;top:203px;width:233px;height:19px"></div>
<div class="t" style="left:393px;top:206px;">Josh Header</div>
<div class="sunk" style="left:391px;top:228px;width:233px;height:42px"></div>
<div class="a" style="left:271px;top:299px;width:369px;height:208px;background:#D6D6CE;border:1px solid;border-color:#fff #000 #000 #fff;box-shadow:inset -1px -1px #808080"></div>
<div class="a" style="left:273px;top:281px;width:51px;height:18px;background:#D6D6CE;"></div>
<div class="a" style="left:273px;top:283px;width:1px;height:16px;background:#fff;"></div>
<div class="a" style="left:274px;top:282px;width:1px;height:1px;background:#fff;"></div>
<div class="a" style="left:275px;top:281px;width:47px;height:1px;background:#fff;"></div>
<div class="a" style="left:323px;top:283px;width:1px;height:16px;background:#000;"></div>
<div class="a" style="left:322px;top:282px;width:1px;height:1px;background:#000;"></div>
<div class="a" style="left:322px;top:283px;width:1px;height:16px;background:#808080;"></div>
<div class="t" style="left:282px;top:285px;">General</div>
<div class="a" style="left:380px;top:281px;width:39px;height:18px;background:#D6D6CE;"></div>
<div class="a" style="left:380px;top:283px;width:1px;height:16px;background:#fff;"></div>
<div class="a" style="left:381px;top:282px;width:1px;height:1px;background:#fff;"></div>
<div class="a" style="left:382px;top:281px;width:35px;height:1px;background:#fff;"></div>
<div class="a" style="left:418px;top:283px;width:1px;height:16px;background:#000;"></div>
<div class="a" style="left:417px;top:282px;width:1px;height:1px;background:#000;"></div>
<div class="a" style="left:417px;top:283px;width:1px;height:16px;background:#808080;"></div>
<div class="t" style="left:388px;top:285px;">Rows</div>
<div class="a" style="left:420px;top:281px;width:46px;height:18px;background:#D6D6CE;"></div>
<div class="a" style="left:420px;top:283px;width:1px;height:16px;background:#fff;"></div>
<div class="a" style="left:421px;top:282px;width:1px;height:1px;background:#fff;"></div>
<div class="a" style="left:422px;top:281px;width:42px;height:1px;background:#fff;"></div>
<div class="a" style="left:465px;top:283px;width:1px;height:16px;background:#000;"></div>
<div class="a" style="left:464px;top:282px;width:1px;height:1px;background:#000;"></div>
<div class="a" style="left:464px;top:283px;width:1px;height:16px;background:#808080;"></div>
<div class="t" style="left:428px;top:285px;">Sorting</div>
<div class="a" style="left:467px;top:281px;width:45px;height:18px;background:#D6D6CE;"></div>
<div class="a" style="left:467px;top:283px;width:1px;height:16px;background:#fff;"></div>
<div class="a" style="left:468px;top:282px;width:1px;height:1px;background:#fff;"></div>
<div class="a" style="left:469px;top:281px;width:41px;height:1px;background:#fff;"></div>
<div class="a" style="left:511px;top:283px;width:1px;height:16px;background:#000;"></div>
<div class="a" style="left:510px;top:282px;width:1px;height:1px;background:#000;"></div>
<div class="a" style="left:510px;top:283px;width:1px;height:16px;background:#808080;"></div>
<div class="t" style="left:473px;top:285px;">Scripts</div>
<div class="a" style="left:322px;top:279px;width:58px;height:21px;background:#D6D6CE;"></div>
<div class="a" style="left:322px;top:281px;width:1px;height:19px;background:#fff;"></div>
<div class="a" style="left:323px;top:280px;width:1px;height:1px;background:#fff;"></div>
<div class="a" style="left:324px;top:279px;width:54px;height:1px;background:#fff;"></div>
<div class="a" style="left:379px;top:281px;width:1px;height:19px;background:#000;"></div>
<div class="a" style="left:378px;top:280px;width:1px;height:1px;background:#000;"></div>
<div class="a" style="left:378px;top:281px;width:1px;height:19px;background:#808080;"></div>
<div class="t" style="left:331px;top:283px;">Columns</div>
<div class="a" style="left:279px;top:309px;width:352px;height:189px;border:1px solid #808080;box-shadow:1px 1px #fff,inset 1px 1px #fff"></div>
<div class="a" style="left:287px;top:319px;width:337px;height:139px;background:#000;"></div>
<div class="a" style="left:288px;top:320px;width:335px;height:137px;background:#D6D6CE;"></div>
<div class="a" style="left:288px;top:320px;width:142px;height:17px;background:#fff;"></div>
<div class="a" style="left:289px;top:321px;width:140px;height:16px;background:#D6D6CE;"></div>
<div class="a" style="left:429px;top:320px;width:1px;height:17px;background:#000;"></div>
<div class="t" style="left:292px;top:322px;">Column Name</div>
<div class="a" style="left:430px;top:320px;width:95px;height:17px;background:#fff;"></div>
<div class="a" style="left:431px;top:321px;width:93px;height:16px;background:#D6D6CE;"></div>
<div class="a" style="left:524px;top:320px;width:1px;height:17px;background:#000;"></div>
<div class="t" style="left:434px;top:322px;">Datatype</div>
<div class="a" style="left:525px;top:320px;width:40px;height:17px;background:#fff;"></div>
<div class="a" style="left:526px;top:321px;width:38px;height:16px;background:#D6D6CE;"></div>
<div class="a" style="left:564px;top:320px;width:1px;height:17px;background:#000;"></div>
<div class="t" style="left:529px;top:322px;">Show</div>
<div class="a" style="left:565px;top:320px;width:40px;height:17px;background:#fff;"></div>
<div class="a" style="left:566px;top:321px;width:38px;height:16px;background:#D6D6CE;"></div>
<div class="a" style="left:604px;top:320px;width:1px;height:17px;background:#000;"></div>
<div class="t" style="left:569px;top:322px;">Is Key</div>
<div class="a" style="left:288px;top:337px;width:317px;height:1px;background:#000;"></div>
<div class="a" style="left:288px;top:338px;width:317px;height:80px;background:#fff;"></div>
<div class="a" style="left:288px;top:353px;width:317px;height:1px;background:#A0A0A0;"></div>
<div class="a" style="left:429px;top:338px;width:1px;height:16px;background:#A0A0A0;"></div>
<div class="a" style="left:524px;top:338px;width:1px;height:16px;background:#A0A0A0;"></div>
<div class="a" style="left:564px;top:338px;width:1px;height:16px;background:#A0A0A0;"></div>
<div class="a" style="left:604px;top:338px;width:1px;height:16px;background:#A0A0A0;"></div>
<div class="t" style="left:291px;top:340px;">account</div>
<div class="t" style="left:433px;top:340px;">String</div>
<div class="a" style="left:538px;top:340px;width:12px;height:12px;background:#fff;border:1px solid;border-color:#000 #D6D6CE #D6D6CE #000;box-shadow:inset 1px 1px #808080"></div>
<svg class="a" style="left:540px;top:342px" width="8" height="8" viewBox="0 0 8 8" shape-rendering="crispEdges"><path d="M1 2l2 2l4-4v3l-4 4l-2-2z" fill="#000"/></svg>
<div class="a" style="left:578px;top:340px;width:12px;height:12px;background:#fff;border:1px solid;border-color:#000 #D6D6CE #D6D6CE #000;box-shadow:inset 1px 1px #808080"></div>
<div class="a" style="left:288px;top:369px;width:317px;height:1px;background:#A0A0A0;"></div>
<div class="a" style="left:429px;top:354px;width:1px;height:16px;background:#A0A0A0;"></div>
<div class="a" style="left:524px;top:354px;width:1px;height:16px;background:#A0A0A0;"></div>
<div class="a" style="left:564px;top:354px;width:1px;height:16px;background:#A0A0A0;"></div>
<div class="a" style="left:604px;top:354px;width:1px;height:16px;background:#A0A0A0;"></div>
<div class="t" style="left:291px;top:356px;letter-spacing:-0.2px">reference (30 Characters)</div>
<div class="t" style="left:433px;top:356px;">String</div>
<div class="a" style="left:538px;top:356px;width:12px;height:12px;background:#fff;border:1px solid;border-color:#000 #D6D6CE #D6D6CE #000;box-shadow:inset 1px 1px #808080"></div>
<svg class="a" style="left:540px;top:358px" width="8" height="8" viewBox="0 0 8 8" shape-rendering="crispEdges"><path d="M1 2l2 2l4-4v3l-4 4l-2-2z" fill="#000"/></svg>
<div class="a" style="left:578px;top:356px;width:12px;height:12px;background:#fff;border:1px solid;border-color:#000 #D6D6CE #D6D6CE #000;box-shadow:inset 1px 1px #808080"></div>
<div class="a" style="left:288px;top:385px;width:317px;height:1px;background:#A0A0A0;"></div>
<div class="a" style="left:429px;top:370px;width:1px;height:16px;background:#A0A0A0;"></div>
<div class="a" style="left:524px;top:370px;width:1px;height:16px;background:#A0A0A0;"></div>
<div class="a" style="left:564px;top:370px;width:1px;height:16px;background:#A0A0A0;"></div>
<div class="a" style="left:604px;top:370px;width:1px;height:16px;background:#A0A0A0;"></div>
<div class="t" style="left:291px;top:372px;">amount</div>
<div class="t" style="left:433px;top:372px;">Currency</div>
<div class="a" style="left:538px;top:372px;width:12px;height:12px;background:#fff;border:1px solid;border-color:#000 #D6D6CE #D6D6CE #000;box-shadow:inset 1px 1px #808080"></div>
<svg class="a" style="left:540px;top:374px" width="8" height="8" viewBox="0 0 8 8" shape-rendering="crispEdges"><path d="M1 2l2 2l4-4v3l-4 4l-2-2z" fill="#000"/></svg>
<div class="a" style="left:578px;top:372px;width:12px;height:12px;background:#fff;border:1px solid;border-color:#000 #D6D6CE #D6D6CE #000;box-shadow:inset 1px 1px #808080"></div>
<div class="a" style="left:288px;top:401px;width:317px;height:1px;background:#A0A0A0;"></div>
<div class="a" style="left:429px;top:386px;width:1px;height:16px;background:#A0A0A0;"></div>
<div class="a" style="left:524px;top:386px;width:1px;height:16px;background:#A0A0A0;"></div>
<div class="a" style="left:564px;top:386px;width:1px;height:16px;background:#A0A0A0;"></div>
<div class="a" style="left:604px;top:386px;width:1px;height:16px;background:#A0A0A0;"></div>
<div class="t" style="left:291px;top:388px;">date</div>
<div class="a" style="left:433px;top:388px;width:23px;height:13px;background:#0A246A;"></div>
<div class="t" style="left:433px;top:388px;color:#fff">Date</div>
<div class="a" style="left:507px;top:387px;width:17px;height:14px;background:#D6D6CE;border-left:1px solid #000;border-right:1px solid #000"></div>
<svg class="a" style="left:512px;top:392px" width="7" height="4" viewBox="0 0 7 4" shape-rendering="crispEdges"><rect x="0" y="0" width="7" height="1" fill="#000"/><rect x="1" y="1" width="5" height="1" fill="#000"/><rect x="2" y="2" width="3" height="1" fill="#000"/><rect x="3" y="3" width="1" height="1" fill="#000"/></svg>
<div class="a" style="left:538px;top:388px;width:12px;height:12px;background:#fff;border:1px solid;border-color:#000 #D6D6CE #D6D6CE #000;box-shadow:inset 1px 1px #808080"></div>
<svg class="a" style="left:540px;top:390px" width="8" height="8" viewBox="0 0 8 8" shape-rendering="crispEdges"><path d="M1 2l2 2l4-4v3l-4 4l-2-2z" fill="#000"/></svg>
<div class="a" style="left:578px;top:388px;width:12px;height:12px;background:#fff;border:1px solid;border-color:#000 #D6D6CE #D6D6CE #000;box-shadow:inset 1px 1px #808080"></div>
<div class="a" style="left:288px;top:417px;width:317px;height:1px;background:#A0A0A0;"></div>
<div class="a" style="left:429px;top:402px;width:1px;height:16px;background:#A0A0A0;"></div>
<div class="a" style="left:524px;top:402px;width:1px;height:16px;background:#A0A0A0;"></div>
<div class="a" style="left:564px;top:402px;width:1px;height:16px;background:#A0A0A0;"></div>
<div class="a" style="left:604px;top:402px;width:1px;height:16px;background:#A0A0A0;"></div>
<div class="t" style="left:291px;top:404px;">index</div>
<div class="t" style="left:433px;top:404px;">String</div>
<div class="a" style="left:538px;top:404px;width:12px;height:12px;background:#fff;border:1px solid;border-color:#000 #D6D6CE #D6D6CE #000;box-shadow:inset 1px 1px #808080"></div>
<svg class="a" style="left:540px;top:406px" width="8" height="8" viewBox="0 0 8 8" shape-rendering="crispEdges"><path d="M1 2l2 2l4-4v3l-4 4l-2-2z" fill="#000"/></svg>
<div class="a" style="left:578px;top:404px;width:12px;height:12px;background:#fff;border:1px solid;border-color:#000 #D6D6CE #D6D6CE #000;box-shadow:inset 1px 1px #808080"></div>
<div class="a" style="left:287px;top:385px;width:318px;height:17px;border:1px dotted #000"></div>
<div class="raised" style="left:287px;top:466px;width:93px;height:25px"><div class="t" style="left:-1px;top:4px;width:93px;text-align:center;transform-origin:50% 0"><u>R</u>efresh Columns</div></div>
<div class="a" style="left:405px;top:515px;width:74px;height:25px;border:1px solid #000;background:#D6D6CE"><div class="raised" style="left:0;top:0;width:72px;height:23px"></div><div class="t" style="left:0;top:4px;width:72px;text-align:center;transform-origin:50% 0">OK</div></div>
<div class="raised" style="left:486px;top:515px;width:73px;height:25px"><div class="t" style="left:-1px;top:4px;width:73px;text-align:center;transform-origin:50% 0">Cancel</div></div>
<div class="raised" style="left:566px;top:515px;width:75px;height:25px"><div class="t" style="left:-1px;top:4px;width:75px;text-align:center;transform-origin:50% 0"><u>A</u>pply</div></div>
<div class="a" style="left:0px;top:738px;width:1024px;height:30px;background:linear-gradient(#2F62D6 0,#2F62D6 1px,#4C8DEA 1px,#4A89E8 3px,#2A62DA 4px,#245EDB 12px,#225AD8 24px,#1E50C8 28px,#1941A5 30px);"></div>
<div class="a" style="left:0;top:738px;width:97px;height:30px;border-radius:0 6px 6px 0/0 15px 15px 0;background:linear-gradient(#2C7A2C 0,#2C7A2C 1px,#6DB86D 2px,#5AAE5A 4px,#45A845 7px,#3DA43D 14px,#379A37 22px,#2F8A2F 27px,#226A3A 30px);box-shadow:inset -3px 0 3px -1px #1E6A1E"></div>
<svg class="a" style="left:10px;top:744px" width="20" height="18" viewBox="0 0 20 18" shape-rendering="crispEdges"><g shape-rendering="auto"><path d="M3 1q3-1.5 6 0l-1.5 6q-3-1.5-6 0z" fill="#F05A28"/><path d="M10.5 1.5q3 1.5 7 0l-1.5 6q-3 1.5-7 0z" fill="#7CC41F"/><path d="M1.2 8q3-1.5 6 0l-1.5 6q-3-1.5-6 0z" fill="#3C8CF0"/><path d="M8.8 8.5q3 1.5 7 0l-1.5 6.5q-3 1.5-7 0z" fill="#FFC915"/></g></svg>
<div class="t" style="left:35px;top:742px;font-style:italic;font-weight:bold;font-size:17px;line-height:22px;transform:none;color:#fff;text-shadow:1px 1px 1px #1A4A1A">start</div>
<div class="a" style="left:107px;top:742px;width:114px;height:22px;border-radius:3px;background:linear-gradient(#3D82F3,#3A7EF1 80%,#3274E8);box-shadow:inset 1px 1px 0 #5A9AF8,inset -1px -1px 0 #2A62D0"></div>
<div class="t" style="left:135px;top:747px;color:#F8C060">2</div>
<div class="t" style="left:145px;top:747px;color:#fff">Microsof...</div>
<div class="a" style="left:223px;top:742px;width:114px;height:22px;border-radius:3px;background:linear-gradient(#3D82F3,#3A7EF1 80%,#3274E8);box-shadow:inset 1px 1px 0 #5A9AF8,inset -1px -1px 0 #2A62D0"></div>
<div class="t" style="left:252px;top:747px;color:#fff">Adobe Acro...</div>
<div class="a" style="left:339px;top:742px;width:114px;height:22px;border-radius:3px;background:linear-gradient(#3D82F3,#3A7EF1 80%,#3274E8);box-shadow:inset 1px 1px 0 #5A9AF8,inset -1px -1px 0 #2A62D0"></div>
<div class="t" style="left:368px;top:747px;color:#fff">Microsoft Excel</div>
<div class="a" style="left:455px;top:742px;width:114px;height:22px;border-radius:3px;background:linear-gradient(#3D82F3,#3A7EF1 80%,#3274E8);box-shadow:inset 1px 1px 0 #5A9AF8,inset -1px -1px 0 #2A62D0"></div>
<div class="t" style="left:484px;top:747px;color:#fff">aocSolutions...</div>
<div class="a" style="left:570px;top:741px;width:116px;height:24px;border-radius:3px;background:#1E52B8;box-shadow:inset 1px 1px 1px #123C8C"></div>
<svg class="a" style="left:581px;top:748px" width="16" height="12" viewBox="0 0 16 12" shape-rendering="crispEdges"><rect x="0" y="0" width="8" height="12" fill="#000"/><rect x="1" y="1" width="6" height="2" fill="#008080"/><rect x="1" y="3" width="6" height="8" fill="#00FFFF"/><rect x="2" y="5" width="4" height="1" fill="#008080"/><rect x="2" y="8" width="4" height="1" fill="#008080"/><rect x="8" y="0" width="8" height="12" fill="#000"/><rect x="9" y="1" width="6" height="2" fill="#808000"/><rect x="9" y="3" width="6" height="8" fill="#FFFF00"/><rect x="10" y="5" width="4" height="1" fill="#808000"/><rect x="10" y="8" width="4" height="1" fill="#808000"/><rect x="5" y="6" width="5" height="1" fill="#00C0C0"/></svg>
<div class="t" style="left:600px;top:747px;color:#fff">Integration ...</div>
<div class="a" style="left:687px;top:742px;width:114px;height:22px;border-radius:3px;background:linear-gradient(#3D82F3,#3A7EF1 80%,#3274E8);box-shadow:inset 1px 1px 0 #5A9AF8,inset -1px -1px 0 #2A62D0"></div>
<div class="t" style="left:716px;top:747px;color:#fff">Microsoft Dy...</div>
<div class="a" style="left:803px;top:742px;width:114px;height:22px;border-radius:3px;background:linear-gradient(#3D82F3,#3A7EF1 80%,#3274E8);box-shadow:inset 1px 1px 0 #5A9AF8,inset -1px -1px 0 #2A62D0"></div>
<div class="t" style="left:832px;top:747px;color:#fff">Document5 ...</div>
<svg class="a" style="left:116px;top:745px" width="16" height="16" viewBox="0 0 16 16" shape-rendering="crispEdges"><rect x="0" y="0" width="16" height="16" fill="#F0A030"/><rect x="1" y="1" width="14" height="14" fill="#FFF4DC"/><circle cx="8" cy="8" r="5" fill="none" stroke="#C08020" stroke-width="1.5" shape-rendering="auto"/><path d="M8 5v3h2" stroke="#C08020" fill="none"/></svg>
<svg class="a" style="left:213px;top:751px" width="7" height="4" viewBox="0 0 7 4" shape-rendering="crispEdges"><rect x="0" y="0" width="7" height="1" fill="#fff"/><rect x="1" y="1" width="5" height="1" fill="#fff"/><rect x="2" y="2" width="3" height="1" fill="#fff"/><rect x="3" y="3" width="1" height="1" fill="#fff"/></svg>
<svg class="a" style="left:232px;top:745px" width="16" height="16" viewBox="0 0 16 16" shape-rendering="crispEdges"><rect x="1" y="2" width="14" height="13" fill="#F8F0F0" stroke="#C02020"/><path d="M3 13q4-2 6-10q2 6 5 8q-6-1-11 2z" fill="none" stroke="#D00000" stroke-width="1.2" shape-rendering="auto"/></svg>
<svg class="a" style="left:348px;top:745px" width="16" height="16" viewBox="0 0 16 16" shape-rendering="crispEdges"><rect x="0" y="0" width="16" height="16" fill="#3A8A3A"/><rect x="1" y="1" width="14" height="14" fill="#E8F4E8"/><path d="M3 3h3l2 3l2-3h3l-3.5 5l3.5 5h-3l-2-3l-2 3H3l3.5-5z" fill="#2E8B2E"/></svg>
<svg class="a" style="left:463px;top:745px" width="17" height="16" viewBox="0 0 17 16" shape-rendering="crispEdges"><path d="M6.5 0.5h7l3 3v12h-10z" fill="#F8F8F0" stroke="#707070"/><g shape-rendering="auto"><circle cx="6.5" cy="9" r="4.5" fill="none" stroke="#1C6FE0" stroke-width="2.2"/><rect x="2.5" y="8" width="8" height="1.8" fill="#1C6FE0"/><rect x="6.5" y="10.5" width="5" height="1.5" fill="#F8F8F0"/><path d="M1 13q4-9 13-10" fill="none" stroke="#E0A020" stroke-width="1"/></g></svg>
<svg class="a" style="left:696px;top:745px" width="16" height="16" viewBox="0 0 16 16" shape-rendering="crispEdges"><rect x="0" y="0" width="16" height="16" fill="#00E0FF"/><rect x="8" y="0" width="8" height="8" fill="#FFF000"/><rect x="0" y="8" width="8" height="8" fill="#FFF000"/><circle cx="8" cy="8" r="4" fill="#B0C0D0" shape-rendering="auto"/></svg>
<svg class="a" style="left:812px;top:745px" width="16" height="16" viewBox="0 0 16 16" shape-rendering="crispEdges"><rect x="3" y="0" width="13" height="16" fill="#fff" stroke="#606060"/><rect x="0" y="3" width="10" height="9" fill="#2050B0"/><path d="M1 4l2 7l2-5l2 5l2-7" stroke="#fff" fill="none" stroke-width="1.2" shape-rendering="auto"/><rect x="11" y="5" width="3" height="1" fill="#404040"/><rect x="11" y="8" width="3" height="1" fill="#404040"/></svg>
<div class="a" style="left:931px;top:738px;width:93px;height:30px;background:linear-gradient(#1C8CE3 0,#1C8CE3 1px,#1DB5F5 2px,#18A0EE 5px,#1392E8 15px,#0F8BE4 24px,#0A6CC8 30px);border-left:1px solid #1446A8"></div>
<div class="a" style="left:922px;top:744px;width:19px;height:19px;border-radius:50%;background:radial-gradient(circle at 40% 35%,#7FB8F8,#2D70DC 60%,#1A4FB8);border:1px solid #A8C4E8"></div>
<svg class="a" style="left:927px;top:749px" width="8" height="9" viewBox="0 0 8 9" shape-rendering="crispEdges"><path d="M5 0l2 2l-3 2.5l3 2.5l-2 2l-5-4.5z" fill="#fff" shape-rendering="auto"/></svg>
<svg class="a" style="left:942px;top:745px" width="16" height="16" viewBox="0 0 16 16" shape-rendering="crispEdges"><rect x="0" y="0" width="16" height="16" fill="#E89020"/><rect x="1" y="1" width="14" height="14" fill="#FFF0D0"/><circle cx="8" cy="8" r="5" fill="#FFF8C0" stroke="#C08020" stroke-width="1.5" shape-rendering="auto"/><path d="M8 5v3h2" stroke="#C08020" fill="none"/></svg>
<div class="t" style="left:963px;top:747px;color:#fff">10:30 AM</div>
</body></html>
